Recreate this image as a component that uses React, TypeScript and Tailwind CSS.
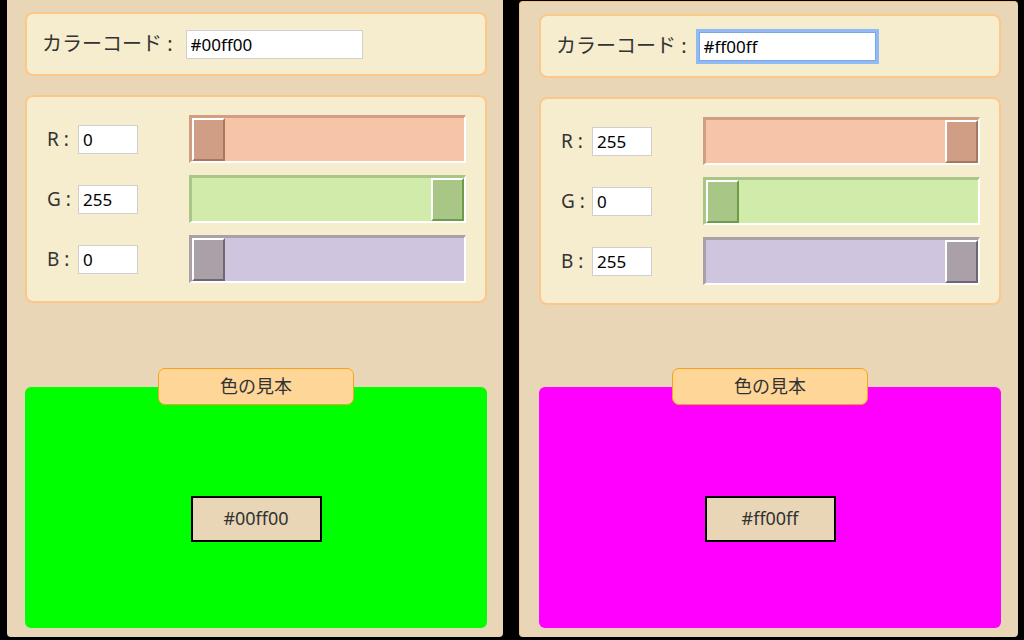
type Channel = {
  key: string
  value: number
  track: string
  thumb: string
}

type PanelProps = {
  hex: string
  r: number
  g: number
  b: number
  focused?: boolean
  right?: boolean
}

const FONT = { fontFamily: '"Noto Sans", "Noto Sans CJK JP", sans-serif' }

function Slider({ channel }: { channel: Channel }) {
  // thumb travels over the inner width of the track
  const left = (channel.value / 255) * 239
  return (
    <div className={`relative h-[48px] flex-1 border-t-[3px] border-l-[3px] border-b-2 border-r-2 border-b-white border-r-white ${channel.track}`}>
      <div
        className={`absolute top-0 h-[43px] w-[33px] border-t-2 border-l-2 border-t-white border-l-white border-b-2 border-r-2 ${channel.thumb}`}
        style={{ left }}
      />
    </div>
  )
}

function Panel({ hex, r, g, b, focused, right }: PanelProps) {
  const channels: Channel[] = [
    { key: "R", value: r, track: "bg-[#f6c4a7] border-t-[#d09e85] border-l-[#d09e85]", thumb: "bg-[#d09e85] border-b-[#a8775f] border-r-[#a8775f]" },
    { key: "G", value: g, track: "bg-[#d1ecaa] border-t-[#a8c686] border-l-[#a8c686]", thumb: "bg-[#a8c686] border-b-[#6f9a4c] border-r-[#6f9a4c]" },
    { key: "B", value: b, track: "bg-[#d0c5df] border-t-[#aaa0a8] border-l-[#aaa0a8]", thumb: "bg-[#aaa0a8] border-b-[#6e6670] border-r-[#6e6670]" },
  ]

  return (
    <div
      className={
        right
          ? "ml-[16px] mt-[1px] flex h-[636px] w-[499px] flex-col rounded-[4px] border-l border-t border-[#f5c27c] bg-[#e9d6b6] pl-[19px] pr-[17px] pt-[12px]"
          : "ml-[7px] flex h-[637px] w-[496px] flex-col rounded-b-[4px] bg-[#e9d6b6] pl-[18px] pr-[16px] pt-[12px]"
      }
    >
      <div className="flex h-[64px] items-center rounded-[8px] border-2 border-[#fcc88a] bg-[#f6ecce] pl-[15px]">
        <span className="text-[20px] text-[#333]">カラーコード :</span>
        <input
          readOnly
          value={hex}
          className={
            focused
              ? "ml-[12px] h-[29px] w-[177px] border border-[#7aa7e8] bg-white px-[4px] text-[17px] text-black shadow-[0_0_0_3px_#8fbaf3] outline-none"
              : "ml-[13px] h-[29px] w-[177px] border border-[#cfcfcf] bg-white px-[4px] text-[17px] text-black outline-none"
          }
        />
      </div>

      <div className="mt-[19px] flex flex-col gap-[12px] rounded-[8px] border-2 border-[#fcc88a] bg-[#f6ecce] pb-[18px] pl-[20px] pr-[19px] pt-[18px]">
        {channels.map((c) => (
          <div key={c.key} className="flex items-center">
            <div className="flex w-[142px] items-center">
              <span className="w-[31px] text-[19px] text-[#333]">{c.key} :</span>
              <input
                readOnly
                value={c.value}
                className="h-[29px] w-[60px] border border-[#cfcfcf] bg-white px-[4px] text-[17px] text-black outline-none"
              />
            </div>
            <Slider channel={c} />
          </div>
        ))}
      </div>

      <div
        className={`relative flex h-[241px] items-center justify-center rounded-[6px] ${right ? "mt-[82px]" : "mt-[84px]"}`}
        style={{ backgroundColor: hex }}
      >
        <div className="absolute -top-[19px] left-1/2 flex h-[37px] w-[196px] -translate-x-1/2 items-center justify-center rounded-[7px] border border-[#f6a21e] bg-[#fed698] text-[18px] text-[#333]">
          色の見本
        </div>
        <div className="mt-[22px] flex h-[46px] w-[131px] items-center justify-center border-2 border-black bg-[#e9d6b6] text-[18px] text-[#333]">
          {hex}
        </div>
      </div>
    </div>
  )
}

export default function App() {
  return (
    <div className="flex h-[640px] w-[1024px] overflow-hidden bg-black" style={FONT}>
      <Panel hex="#00ff00" r={0} g={255} b={0} />
      <Panel hex="#ff00ff" r={255} g={0} b={255} focused right />
    </div>
  )
}
